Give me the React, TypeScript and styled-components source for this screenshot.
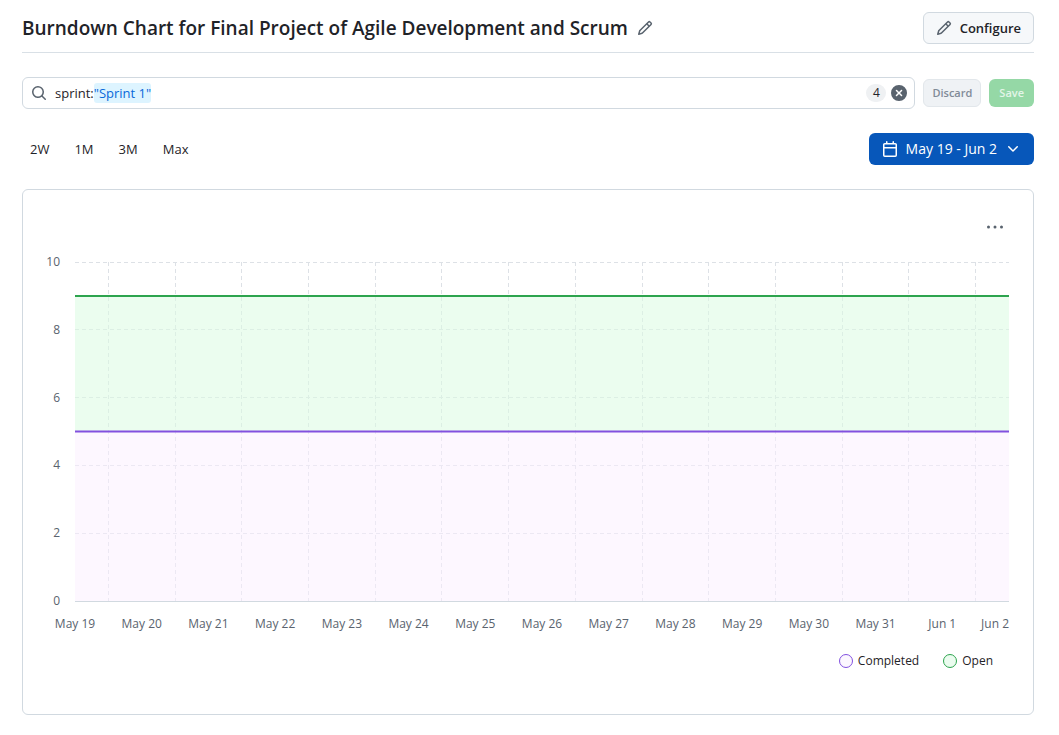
import React from "react";
import styled, { createGlobalStyle, css } from "styled-components";

const GlobalStyle = createGlobalStyle`
  *, *::before, *::after { box-sizing: border-box; }
  body {
    margin: 0;
    background: #ffffff;
    color: #1f2328;
    font-family: "Open Sans", "Noto Sans", sans-serif;
    font-size: 13px;
    line-height: 20px;
  }
  button, input { font: inherit; color: inherit; margin: 0; }
`;

const Page = styled.main`
  padding: 12px 25px 20px 22px;
`;

const Header = styled.header`
  display: flex;
  align-items: center;
  justify-content: space-between;
  padding-bottom: 8px;
  border-bottom: 1px solid #d9e0e6;
`;

const TitleGroup = styled.div`
  display: flex;
  align-items: center;
  gap: 1px;
`;

const Title = styled.h1`
  margin: 0;
  font-size: 19px;
  font-weight: 600;
  line-height: 32px;
`;

const IconButton = styled.button`
  display: inline-flex;
  align-items: center;
  justify-content: center;
  width: 32px;
  height: 32px;
  padding: 0;
  border: 0;
  border-radius: 6px;
  background: transparent;
  color: #59636e;
  cursor: pointer;
`;

const ClearButton = styled(IconButton)`
  width: 16px;
  height: 16px;
`;

type Variant = "default" | "muted" | "success" | "accent";

const variants = {
  default: css`
    height: 32px;
    padding: 0 12px;
    border-color: #d1d9e0;
    background: #f6f8fa;
    font-weight: 600;
    svg { color: #59636e; }
  `,
  muted: css`
    height: 28px;
    padding: 0 8px;
    border-color: #e2e7eb;
    background: #eff2f5;
    color: #818b98;
    font-size: 11px;
    font-weight: 600;
  `,
  success: css`
    height: 28px;
    padding: 0 9px;
    background: #95d8a6;
    color: #e3f5e8;
    font-size: 11px;
    font-weight: 600;
  `,
  accent: css`
    height: 32px;
    padding: 0 12px;
    background: #0757ba;
    color: #ffffff;
    font-size: 14px;
  `,
};

const Button = styled.button<{ $variant: Variant }>`
  display: inline-flex;
  align-items: center;
  gap: 8px;
  flex: none;
  border: 1px solid transparent;
  border-radius: 6px;
  white-space: nowrap;
  cursor: pointer;
  ${({ $variant }) => variants[$variant]}
`;

const FilterRow = styled.form`
  display: flex;
  align-items: center;
  gap: 8px;
  margin-top: 24px;
`;

const FilterBox = styled.div`
  display: flex;
  align-items: center;
  flex: 1;
  height: 32px;
  padding: 0 7px 0 8px;
  border: 1px solid #d1d9e0;
  border-radius: 6px;
  svg { color: #59636e; }
`;

const FilterKey = styled.label`
  margin-left: 8px;
`;

const FilterValue = styled.input`
  field-sizing: content;
  height: 20px;
  padding: 0;
  border: 0;
  border-radius: 3px;
  outline: 0;
  background: #ddf4ff;
  color: #0969da;
`;

const Count = styled.span`
  min-width: 20px;
  margin-left: auto;
  margin-right: 5px;
  padding: 0 6px;
  border-radius: 10px;
  background: #eff1f3;
  font-size: 12px;
  line-height: 18px;
  text-align: center;
`;

const RangeRow = styled.div`
  display: flex;
  align-items: center;
  justify-content: space-between;
  margin-top: 24px;
`;

const RangeList = styled.nav`
  display: flex;
  gap: 9px;
`;

const RangeButton = styled.button`
  padding: 4px 8px;
  border: 0;
  border-radius: 6px;
  background: transparent;
  cursor: pointer;
`;

const Card = styled.section`
  margin-top: 24px;
  padding: 21px 24px 43px 52px;
  border: 1px solid #d1d9e0;
  border-radius: 6px;
`;

const CardActions = styled.div`
  display: flex;
  justify-content: flex-end;
  margin-right: -2px;
`;

const Plot = styled.svg`
  display: block;
  width: 100%;
  height: 339px;
  margin-top: 19px;
  overflow: visible;
  font-size: 12px;
  fill: #59636e;
`;

const Legend = styled.ul`
  display: flex;
  justify-content: flex-end;
  gap: 24px;
  margin: 50px 16px 0 0;
  padding: 0;
  list-style: none;
  font-size: 12px;
`;

const LegendItem = styled.li`
  display: flex;
  align-items: center;
  gap: 5px;
`;

const Swatch = styled.span<{ $line: string; $fill: string }>`
  width: 14px;
  height: 14px;
  border: 1px solid ${({ $line }) => $line};
  border-radius: 50%;
  background: ${({ $fill }) => $fill};
`;

const icons = {
  pencil:
    "M11.013 1.427a1.75 1.75 0 0 1 2.474 0l1.086 1.086a1.75 1.75 0 0 1 0 2.474l-8.61 8.61c-.21.21-.47.364-.756.445l-3.251.93a.75.75 0 0 1-.927-.928l.929-3.25c.081-.286.235-.547.445-.758l8.61-8.61Zm.176 4.823L9.75 4.81l-6.286 6.287a.253.253 0 0 0-.064.108l-.558 1.953 1.953-.558a.253.253 0 0 0 .108-.064Zm1.238-3.763a.25.25 0 0 0-.354 0L10.811 3.75l1.439 1.44 1.263-1.263a.25.25 0 0 0 0-.354Z",
  search:
    "M10.68 11.74a6 6 0 0 1-7.922-8.982 6 6 0 0 1 8.982 7.922l3.04 3.04a.749.749 0 0 1-.326 1.275.749.749 0 0 1-.734-.215ZM11.5 7a4.499 4.499 0 1 0-8.997 0A4.499 4.499 0 0 0 11.5 7Z",
  clear:
    "M2.343 13.657A8 8 0 1 1 13.658 2.343 8 8 0 0 1 2.343 13.657ZM6.03 4.97a.751.751 0 0 0-1.042.018.751.751 0 0 0-.018 1.042L6.94 8 4.97 9.97a.749.749 0 0 0 .326 1.275.749.749 0 0 0 .734-.215L8 9.06l1.97 1.97a.749.749 0 0 0 1.275-.326.749.749 0 0 0-.215-.734L9.06 8l1.97-1.97a.749.749 0 0 0-.326-1.275.749.749 0 0 0-.734.215L8 6.94Z",
  calendar:
    "M4.75 0a.75.75 0 0 1 .75.75V2h5V.75a.75.75 0 0 1 1.5 0V2h1.25c.966 0 1.75.784 1.75 1.75v10.5A1.75 1.75 0 0 1 13.25 16H2.75A1.75 1.75 0 0 1 1 14.25V3.75C1 2.784 1.784 2 2.75 2H4V.75A.75.75 0 0 1 4.75 0ZM2.5 7.5v6.75c0 .138.112.25.25.25h10.5a.25.25 0 0 0 .25-.25V7.5Zm10.75-4H2.75a.25.25 0 0 0-.25.25V6h11V3.75a.25.25 0 0 0-.25-.25Z",
  chevron:
    "M12.78 5.22a.749.749 0 0 1 0 1.06l-4.25 4.25a.749.749 0 0 1-1.06 0L3.22 6.28a.749.749 0 1 1 1.06-1.06L8 8.939l3.72-3.719a.749.749 0 0 1 1.06 0Z",
  more: "M8 9.5a1.5 1.5 0 1 0 0-3 1.5 1.5 0 0 0 0 3ZM1.5 9.5a1.5 1.5 0 1 0 0-3 1.5 1.5 0 0 0 0 3Zm13 0a1.5 1.5 0 1 0 0-3 1.5 1.5 0 0 0 0 3Z",
};

const Icon = ({ name }: { name: keyof typeof icons }) => (
  <svg width="16" height="16" viewBox="0 0 16 16" fill="currentColor" aria-hidden="true">
    <path d={icons[name]} />
  </svg>
);

const days = [
  "May 19", "May 20", "May 21", "May 22", "May 23", "May 24", "May 25", "May 26",
  "May 27", "May 28", "May 29", "May 30", "May 31", "Jun 1", "Jun 2",
];
const ticks = [0, 2, 4, 6, 8, 10];
const openCount = 9;
const completedCount = 5;

const series = [
  { name: "Completed", line: "#8250df", fill: "#fcf7ff" },
  { name: "Open", line: "#2da44e", fill: "#ebfcef" },
];

const xAt = (step: number) => `${(step / (days.length - 1)) * 100}%`;
const yAt = (value: number) => `${100 - value * 10}%`;

function BurndownPlot() {
  return (
    <Plot role="img" aria-label="Burndown chart, May 19 to June 2">
      <g stroke="#dde1e6" strokeDasharray="4 3" shapeRendering="crispEdges">
        {ticks.slice(1).map((t) => (
          <line key={t} x1="0" x2="100%" y1={yAt(t)} y2={yAt(t)} />
        ))}
        {days.slice(1).map((d, i) => (
          <line key={d} x1={xAt(i + 0.5)} x2={xAt(i + 0.5)} y1="0" y2="100%" />
        ))}
      </g>
      <rect width="100%" y={yAt(openCount)} height="40%" fill="#dafbe1" fillOpacity="0.55" />
      <rect width="100%" y={yAt(completedCount)} height="50%" fill="#fbefff" fillOpacity="0.5" />
      <line x1="0" x2="100%" y1="100%" y2="100%" stroke="#d1d9e0" shapeRendering="crispEdges" />
      <line x1="0" x2="100%" y1={yAt(openCount)} y2={yAt(openCount)} stroke="#2da44e" strokeWidth="2" />
      <line x1="0" x2="100%" y1={yAt(completedCount)} y2={yAt(completedCount)} stroke="#8250df" strokeWidth="2" />
      <g textAnchor="end">
        {ticks.map((t) => (
          <text key={t} x="-15" y={yAt(t)} dy="4">{t}</text>
        ))}
      </g>
      <g transform="translate(0 27)">
        {days.map((d, i) => (
          <text key={d} x={xAt(i)} y="100%" textAnchor={i === days.length - 1 ? "end" : "middle"}>
            {d}
          </text>
        ))}
      </g>
    </Plot>
  );
}

export default function App() {
  const [value, setValue] = React.useState('"Sprint 1"');
  return (
    <>
      <GlobalStyle />
      <Page>
        <Header>
          <TitleGroup>
            <Title>Burndown Chart for Final Project of Agile Development and Scrum</Title>
            <IconButton type="button" aria-label="Edit title"><Icon name="pencil" /></IconButton>
          </TitleGroup>
          <Button type="button" $variant="default"><Icon name="pencil" />Configure</Button>
        </Header>

        <FilterRow onSubmit={(e) => e.preventDefault()}>
          <FilterBox>
            <Icon name="search" />
            <FilterKey htmlFor="sprint-filter">sprint:</FilterKey>
            <FilterValue id="sprint-filter" value={value} onChange={(e) => setValue(e.target.value)} />
            <Count>4</Count>
            <ClearButton type="button" aria-label="Clear filter" onClick={() => setValue("")}>
              <Icon name="clear" />
            </ClearButton>
          </FilterBox>
          <Button type="button" $variant="muted">Discard</Button>
          <Button type="submit" $variant="success">Save</Button>
        </FilterRow>

        <RangeRow>
          <RangeList aria-label="Date range">
            {["2W", "1M", "3M", "Max"].map((r) => (
              <RangeButton key={r} type="button">{r}</RangeButton>
            ))}
          </RangeList>
          <Button type="button" $variant="accent">
            <Icon name="calendar" />May 19 - Jun 2<Icon name="chevron" />
          </Button>
        </RangeRow>

        <Card>
          <CardActions>
            <IconButton type="button" aria-label="Chart options"><Icon name="more" /></IconButton>
          </CardActions>
          <BurndownPlot />
          <Legend>
            {series.map((s) => (
              <LegendItem key={s.name}>
                <Swatch $line={s.line} $fill={s.fill} />
                {s.name}
              </LegendItem>
            ))}
          </Legend>
        </Card>
      </Page>
    </>
  );
}
